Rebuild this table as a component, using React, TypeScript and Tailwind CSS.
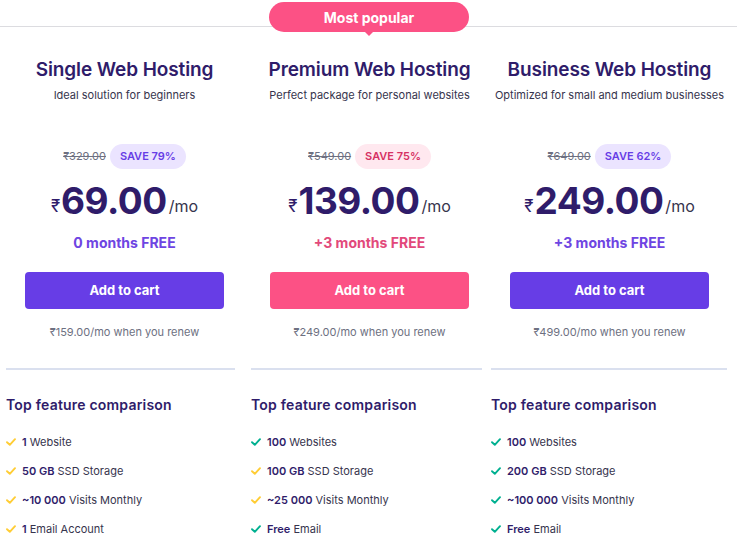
import React from "react";

type Feature = { bold: string; rest: string; ok: boolean };

type Plan = {
  name: string;
  sub: string;
  old: string;
  save: string;
  price: string;
  free: string;
  renew: string;
  pink: boolean;
  features: Feature[];
};

const plans: Plan[] = [
  {
    name: "Single Web Hosting",
    sub: "Ideal solution for beginners",
    old: "₹329.00",
    save: "SAVE 79%",
    price: "69.00",
    free: "0 months FREE",
    renew: "₹159.00/mo when you renew",
    pink: false,
    features: [
      { bold: "1", rest: "Website", ok: false },
      { bold: "50 GB", rest: "SSD Storage", ok: false },
      { bold: "~10 000", rest: "Visits Monthly", ok: false },
      { bold: "1", rest: "Email Account", ok: false },
    ],
  },
  {
    name: "Premium Web Hosting",
    sub: "Perfect package for personal websites",
    old: "₹549.00",
    save: "SAVE 75%",
    price: "139.00",
    free: "+3 months FREE",
    renew: "₹249.00/mo when you renew",
    pink: true,
    features: [
      { bold: "100", rest: "Websites", ok: true },
      { bold: "100 GB", rest: "SSD Storage", ok: false },
      { bold: "~25 000", rest: "Visits Monthly", ok: false },
      { bold: "Free", rest: "Email", ok: true },
    ],
  },
  {
    name: "Business Web Hosting",
    sub: "Optimized for small and medium businesses",
    old: "₹649.00",
    save: "SAVE 62%",
    price: "249.00",
    free: "+3 months FREE",
    renew: "₹499.00/mo when you renew",
    pink: false,
    features: [
      { bold: "100", rest: "Websites", ok: true },
      { bold: "200 GB", rest: "SSD Storage", ok: true },
      { bold: "~100 000", rest: "Visits Monthly", ok: true },
      { bold: "Free", rest: "Email", ok: true },
    ],
  },
];

// column boxes: outer width + paddings so dividers land where the shot has them
const cols = [
  { box: "w-[245px] pl-[6px] pr-[10px]", top: "pl-[8px]" },
  { box: "w-[241px] pl-[6px] pr-[4px]", top: "pl-[6px]" },
  { box: "w-[251px] pl-[5px] pr-[10px]", top: "pl-[1px]" },
];

const Check = ({ ok }: { ok: boolean }) => (
  <svg width="10" height="8" viewBox="0 0 10 8" className="shrink-0">
    <path
      d="M1 4.2 L3.8 6.8 L9 1.2"
      fill="none"
      stroke={ok ? "#00b090" : "#ffcd35"}
      strokeWidth="1.9"
      strokeLinecap="round"
      strokeLinejoin="round"
    />
  </svg>
);

const PlanColumn = ({ plan, idx }: { plan: Plan; idx: number }) => {
  const c = cols[idx];
  return (
    <div className={`flex flex-col ${c.box}`}>
      {/* Top: name, prices, button */}
      <div className={`flex flex-col items-center ${c.top}`}>
        <h2 className="mt-[29px] text-[19px] leading-[28px] font-semibold text-[#2f1c6a] tracking-[-0.1px] whitespace-nowrap">
          {plan.name}
        </h2>
        <p className="mt-[3px] text-[11px] leading-[16px] text-[#36344d] whitespace-nowrap">{plan.sub}</p>

        <div className="mt-[41px] flex items-center gap-[4px] h-[25px]">
          <span className="text-[11px] text-[#6d7081] line-through">{plan.old}</span>
          <span
            className={`h-[25px] px-[10px] rounded-full flex items-center text-[11px] font-semibold ${
              plan.pink ? "bg-[#ffe8ef] text-[#d63163]" : "bg-[#ebe4ff] text-[#673de6]"
            }`}
          >
            {plan.save}
          </span>
        </div>

        <div className="mt-[12px] h-[40px] flex items-end text-[#2f1c6a]">
          <span className="text-[17px] leading-[26px] mb-[2px] mr-[1px]">₹</span>
          <span className="text-[37px] leading-[40px] font-bold tracking-[-0.5px]">{plan.price}</span>
          <span className="text-[16px] leading-[26px] mb-[2px] ml-[2px] text-[#36344d]">/mo</span>
        </div>

        <p
          className={`mt-[12px] text-[14px] leading-[20px] font-bold ${
            plan.pink ? "text-[#e2497b]" : "text-[#6e45e2]"
          }`}
        >
          {plan.free}
        </p>

        <button
          className={`mt-[19px] w-[199px] h-[37px] rounded-[4px] text-white text-[13px] font-bold ${
            plan.pink ? "bg-[#fc5185]" : "bg-[#673de6]"
          }`}
        >
          Add to cart
        </button>

        <p className="mt-[15px] text-[11px] leading-[16px] text-[#6d7081] whitespace-nowrap">{plan.renew}</p>
      </div>

      <div className="mt-[28px] h-[2px] bg-[#dae0ef]" />

      {/* Features */}
      <h3 className="mt-[25px] text-[14px] leading-[20px] font-semibold text-[#2f1c6a] tracking-[0.2px] whitespace-nowrap">
        Top feature comparison
      </h3>
      <ul className="mt-[19px] flex flex-col gap-[13px]">
        {plan.features.map((f, i) => (
          <li key={i} className="flex items-center gap-[6px] h-[16px] text-[11px] leading-[16px] whitespace-nowrap">
            <Check ok={f.ok} />
            <span>
              <span className="font-semibold text-[#2f1c6a]">{f.bold}</span>{" "}
              <span className="text-[#36344d]">{f.rest}</span>
            </span>
          </li>
        ))}
      </ul>
    </div>
  );
};

export default function App() {
  return (
    <div
      className="relative w-[737px] h-[542px] overflow-hidden bg-white"
      style={{ fontFamily: "Inter, 'DejaVu Sans', sans-serif" }}
    >
      <div className="h-[27px] border-b border-[#dcdce0]" />

      {/* Most popular badge */}
      <div className="absolute left-[269px] top-[2px] w-[200px] h-[30px] rounded-[15px] bg-[#fc5185] flex items-center justify-center">
        <span className="text-white text-[14px] font-bold">Most popular</span>
        <div className="absolute left-[95px] bottom-[-4px] w-0 h-0 border-l-[5px] border-r-[5px] border-t-[5px] border-l-transparent border-r-transparent border-t-[#fc5185]" />
      </div>

      <div className="flex">
        {plans.map((p, i) => (
          <PlanColumn key={p.name} plan={p} idx={i} />
        ))}
      </div>
    </div>
  );
}
